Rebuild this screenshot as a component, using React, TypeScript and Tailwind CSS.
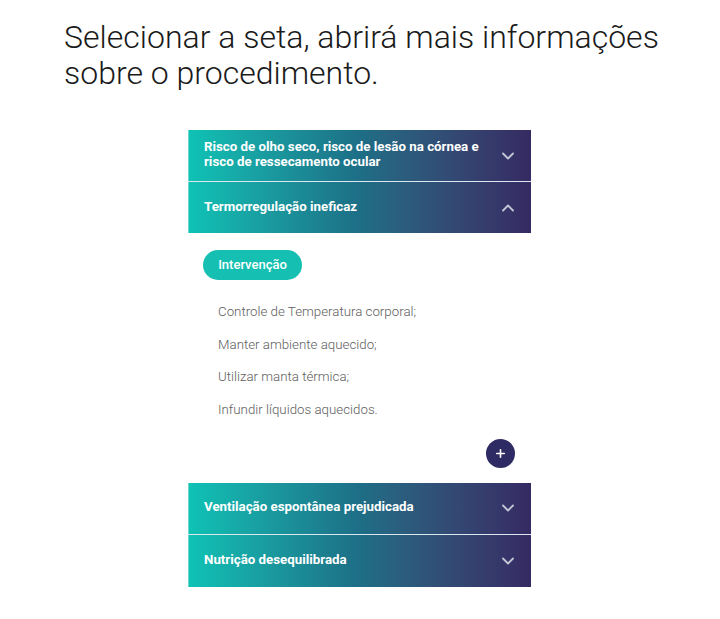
import { ChevronDown, ChevronUp, Plus } from 'lucide-react'

const items = [
  'Controle de Temperatura corporal;',
  'Manter ambiente aquecido;',
  'Utilizar manta térmica;',
  'Infundir líquidos aquecidos.',
]

function Header({ title, open, last }: { title: string; open?: boolean; last?: boolean }) {
  return (
    <div
      className={`flex items-center justify-between border-l border-[#6fd9cf] bg-gradient-to-r from-[#0ec2b4] via-[#1d6e86] to-[#352a63] pb-[3px] pl-[15px] pr-[13px] ${
        last ? 'h-[52px]' : 'h-[51px]'
      }`}
    >
      <span className="max-w-[290px] text-[13.3px] leading-[15px] font-bold text-white">{title}</span>
      {open ? (
        <ChevronUp className="mt-[3px] h-5 w-5 text-[#c3c6d4]" strokeWidth={2.2} />
      ) : (
        <ChevronDown className="mt-[3px] h-5 w-5 text-[#c3c6d4]" strokeWidth={2.2} />
      )}
    </div>
  )
}

export default function App() {
  return (
    <div className="min-h-[619px] w-[720px] bg-white font-['Roboto',sans-serif]">
      <h1 className="pl-16 pt-[19px] text-[32px] leading-[36px] font-light text-[#1a1a1a]">
        Selecionar a seta, abrirá mais informações
        <br />
        sobre o procedimento.
      </h1>

      <div className="ml-[188px] mt-[39px] w-[343px]">
        <Header title="Risco de olho seco, risco de lesão na córnea e risco de ressecamento ocular" />
        <div className="h-px bg-[#dbe9ee]" />
        <Header title="Termorregulação ineficaz" open />

        <div className="px-[15px] pt-[17px] pb-[15px]">
          <div className="flex h-[30px] w-[99px] items-center justify-center rounded-full bg-[#15bfb1] text-[13px] font-medium text-white">
            Intervenção
          </div>
          <ul className="mt-[22px] flex flex-col gap-[13.5px] pl-[15px]">
            {items.map((t) => (
              <li key={t} className="text-[13.3px] leading-[19px] font-light text-[#5e5e5e]">
                {t}
              </li>
            ))}
          </ul>
          <div className="mt-[20px] flex justify-end pr-[1px]">
            <div className="flex h-[29px] w-[29px] items-center justify-center rounded-full bg-[#2e2a63]">
              <Plus className="h-[13px] w-[13px] text-white" strokeWidth={3} />
            </div>
          </div>
        </div>

        <Header title="Ventilação espontânea prejudicada" />
        <div className="h-px bg-[#dbe9ee]" />
        <Header title="Nutrição desequilibrada" last />
      </div>
    </div>
  )
}
